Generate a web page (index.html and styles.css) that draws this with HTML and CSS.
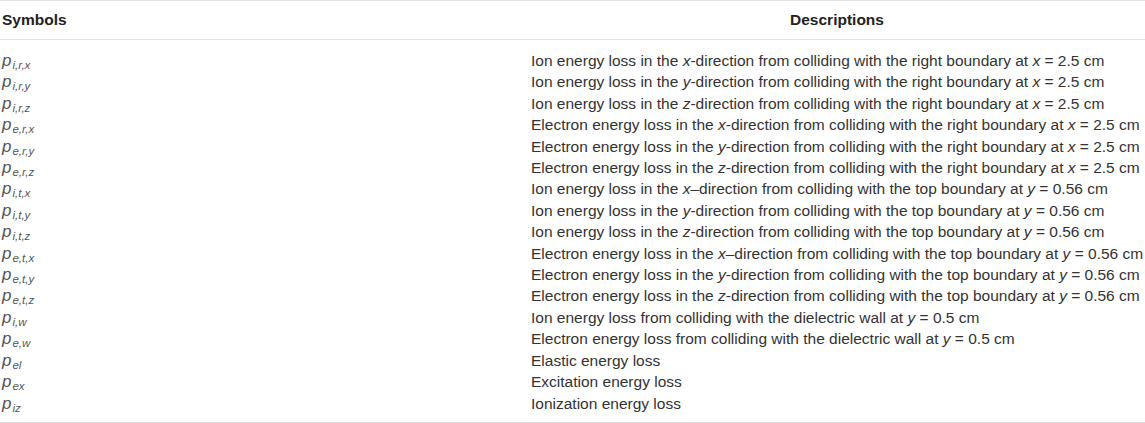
FILE: index.html
```html
<!DOCTYPE html>
<html>
<head>
<meta charset="utf-8">
<link rel="stylesheet" href="styles.css">
</head>
<body>
<table class="tbl">
  <thead>
    <tr><th class="c1">Symbols</th><th class="c2">Descriptions</th></tr>
  </thead>
  <tbody>
    <tr class="first"><td class="sym"><i>p</i><sub>i,r,x</sub></td><td>Ion energy loss in the <i>x</i>-direction from colliding with the right boundary at <i>x</i> = 2.5 cm</td></tr>
    <tr><td class="sym"><i>p</i><sub>i,r,y</sub></td><td>Ion energy loss in the <i>y</i>-direction from colliding with the right boundary at <i>x</i> = 2.5 cm</td></tr>
    <tr><td class="sym"><i>p</i><sub>i,r,z</sub></td><td>Ion energy loss in the <i>z</i>-direction from colliding with the right boundary at <i>x</i> = 2.5 cm</td></tr>
    <tr><td class="sym"><i>p</i><sub>e,r,x</sub></td><td>Electron energy loss in the <i>x</i>-direction from colliding with the right boundary at <i>x</i> = 2.5 cm</td></tr>
    <tr><td class="sym"><i>p</i><sub>e,r,y</sub></td><td>Electron energy loss in the <i>y</i>-direction from colliding with the right boundary at <i>x</i> = 2.5 cm</td></tr>
    <tr><td class="sym"><i>p</i><sub>e,r,z</sub></td><td>Electron energy loss in the <i>z</i>-direction from colliding with the right boundary at <i>x</i> = 2.5 cm</td></tr>
    <tr><td class="sym"><i>p</i><sub>i,t,x</sub></td><td>Ion energy loss in the <i>x</i>–direction from colliding with the top boundary at <i>y</i> = 0.56 cm</td></tr>
    <tr><td class="sym"><i>p</i><sub>i,t,y</sub></td><td>Ion energy loss in the <i>y</i>-direction from colliding with the top boundary at <i>y</i> = 0.56 cm</td></tr>
    <tr><td class="sym"><i>p</i><sub>i,t,z</sub></td><td>Ion energy loss in the <i>z</i>-direction from colliding with the top boundary at <i>y</i> = 0.56 cm</td></tr>
    <tr><td class="sym"><i>p</i><sub>e,t,x</sub></td><td>Electron energy loss in the <i>x</i>–direction from colliding with the top boundary at <i>y</i> = 0.56 cm</td></tr>
    <tr><td class="sym"><i>p</i><sub>e,t,y</sub></td><td>Electron energy loss in the <i>y</i>-direction from colliding with the top boundary at <i>y</i> = 0.56 cm</td></tr>
    <tr><td class="sym"><i>p</i><sub>e,t,z</sub></td><td>Electron energy loss in the <i>z</i>-direction from colliding with the top boundary at <i>y</i> = 0.56 cm</td></tr>
    <tr><td class="sym"><i>p</i><sub>i,w</sub></td><td>Ion energy loss from colliding with the dielectric wall at <i>y</i> = 0.5 cm</td></tr>
    <tr><td class="sym"><i>p</i><sub>e,w</sub></td><td>Electron energy loss from colliding with the dielectric wall at <i>y</i> = 0.5 cm</td></tr>
    <tr><td class="sym"><i>p</i><sub>el</sub></td><td>Elastic energy loss</td></tr>
    <tr><td class="sym"><i>p</i><sub>ex</sub></td><td>Excitation energy loss</td></tr>
    <tr class="last"><td class="sym"><i>p</i><sub>iz</sub></td><td>Ionization energy loss</td></tr>
  </tbody>
</table>
</body>
</html>
```
FILE: styles.css
```css
html, body {
  margin: 0;
  padding: 0;
  background: #fff;
}
.tbl {
  width: 1145px;
  border-collapse: collapse;
  font-family: "Liberation Sans", Arial, sans-serif;
  font-size: 15.5px;
  color: #333;
  border-top: 1px solid #e2e2e2;
  border-bottom: 2px solid #dcdcdc;
}
.tbl th {
  font-weight: bold;
  color: #222;
  height: 38px;
  padding: 0;
  border-bottom: 1px solid #e2e2e2;
  vertical-align: middle;
}
.tbl th.c1 {
  text-align: left;
  padding-left: 2px;
  width: 527px;
}
.tbl th.c2 {
  text-align: center;
}
.tbl td {
  padding: 0;
  line-height: 21.4px;
  height: 21.4px;
  white-space: nowrap;
}
.tbl td.sym {
  padding-left: 2px;
  color: #555;
}
.tbl td + td {
  padding-left: 2px;
}
.tbl tr.first td {
  padding-top: 10px;
}
.tbl tr.last td {
  padding-bottom: 8px;
}
.sym i {
  font-size: 17px;
}
.sym sub {
  font-style: italic;
  font-size: 11.5px;
  line-height: 0;
  vertical-align: -3px;
  margin-left: 1px;
}
```
